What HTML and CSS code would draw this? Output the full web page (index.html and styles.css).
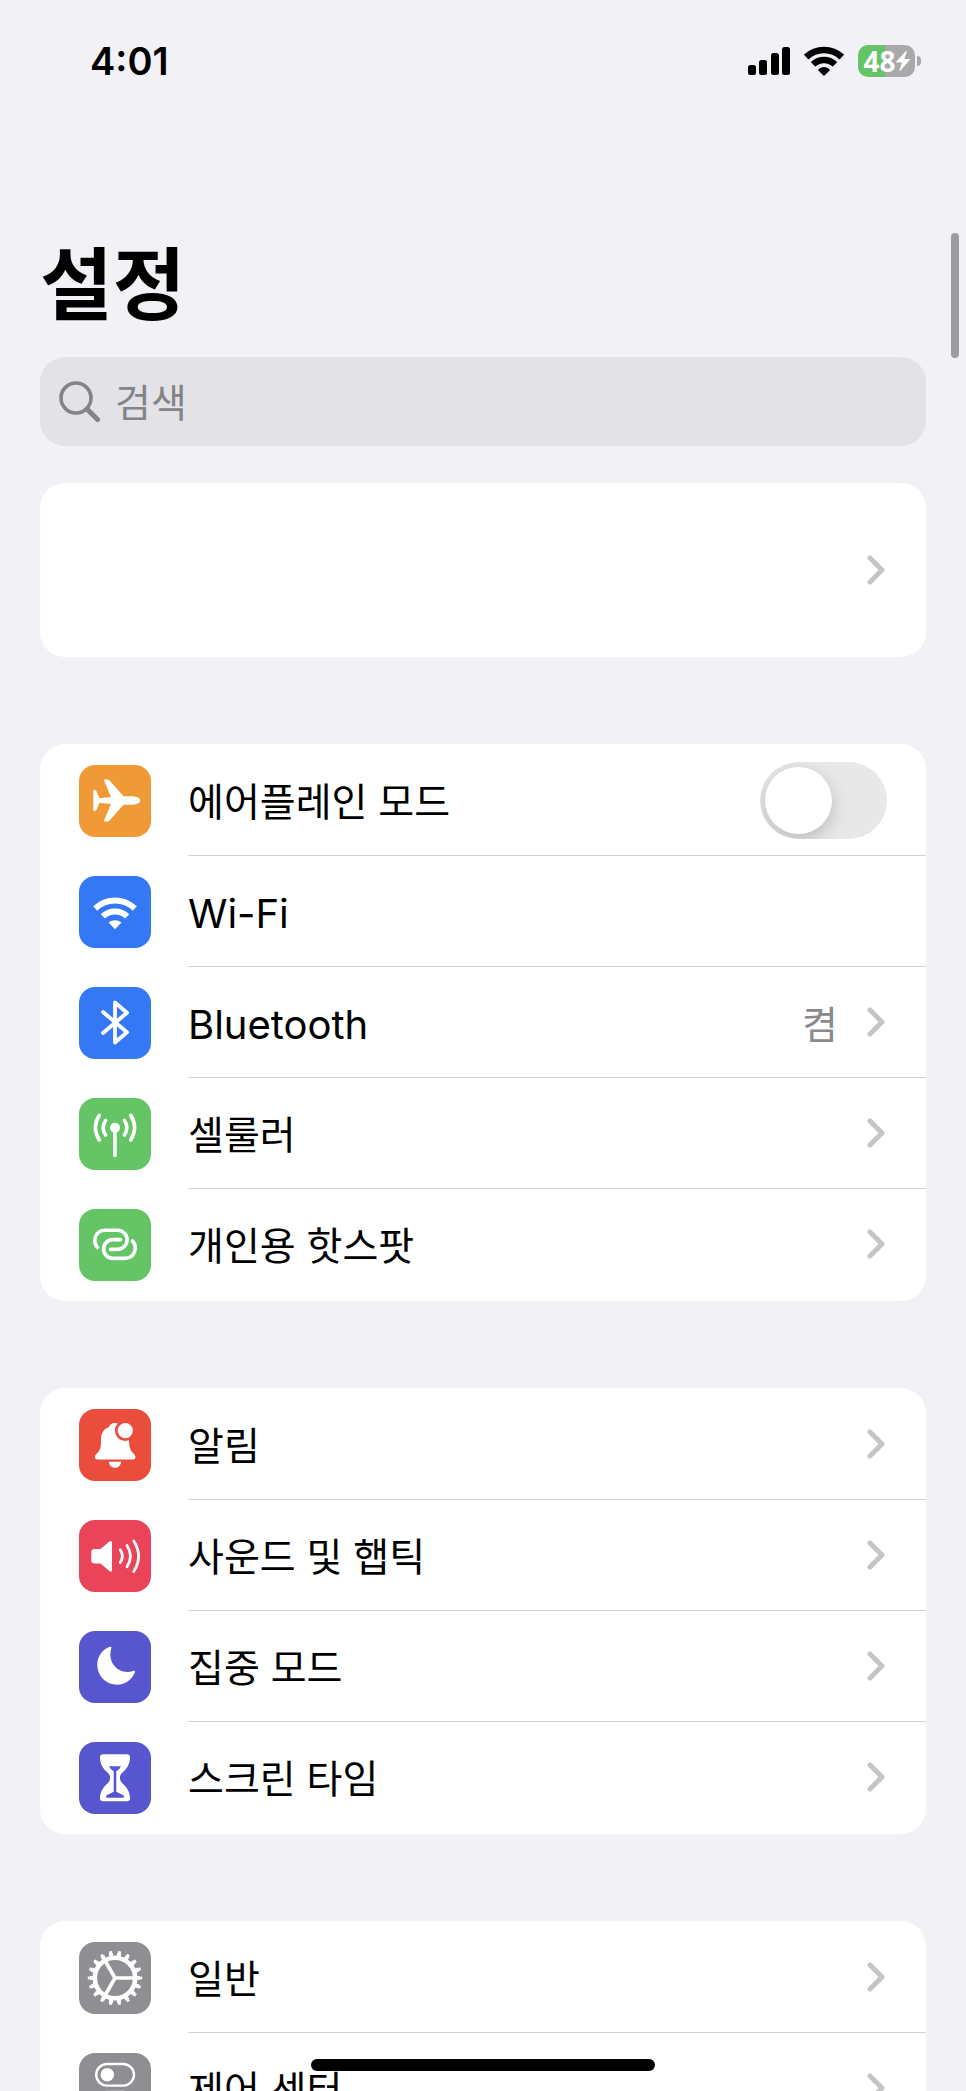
FILE: index.html
```html
<!doctype html>
<html lang="ko">
    <head>
        <meta charset="utf-8">
        <meta name="viewport" content="width=device-width,initial-scale=1">
        <title>설정</title>
        <link rel="stylesheet" href="styles.css">
    </head>
    <body>
        <svg class="defs" aria-hidden="true">
            <symbol id="chevron" viewBox="0 0 18 30">
                <path d="M3 3l12 12L3 27" fill="none" stroke="#c5c5c7" stroke-width="5" stroke-linecap="round" stroke-linejoin="round"/>
            </symbol>
        </svg>
        <header class="status-bar">
            <span class="clock">4:01</span>
            <div class="status-icons">
                <svg class="signal" viewBox="0 0 42 28">
                    <rect x="0" y="18" width="8" height="10" rx="2.5"/>
                    <rect x="11" y="13" width="8" height="15" rx="2.5"/>
                    <rect x="23" y="6" width="8" height="22" rx="2.5"/>
                    <rect x="34" y="0" width="8" height="28" rx="2.5"/>
                </svg>
                <svg class="wifi" viewBox="0 0 40 30">
                    <g fill="none" stroke="#000">
                        <path d="M2.2 11A26 26 0 0 1 37.8 11" stroke-width="6.6"/>
                        <path d="M9 18.4A16 16 0 0 1 31 18.4" stroke-width="6.4"/>
                    </g>
                    <path d="M20 30l-5.6-5.6q-.6-.8.3-1.4a9 9 0 0 1 10.6 0q.9.6.3 1.4z"/>
                </svg>
                <div class="battery">
                    <div class="battery-body">
                        <span>48</span>
                        <svg class="bolt" viewBox="0 0 14 20">
                            <path d="M10 0L.3 10.6q-.5.9.4.9H6L3.4 19.2q0 1 .9.6L13.7 9q.5-.9-.4-.9H8.2L10.8.6Q10.8-.3 10 0z" fill="#fff"/>
                        </svg>
                    </div>
                    <div class="battery-tip"></div>
                </div>
            </div>
        </header>
        <main class="main">
            <h1>설정</h1>
            <label class="search">
                <svg class="search-icon" viewBox="0 0 42 42">
                    <g fill="none" stroke="#838388" stroke-linecap="round">
                        <circle cx="17" cy="17" r="15" stroke-width="3.6"/>
                        <path d="M28 28l10.500 10.500" stroke-width="5"/>
                    </g>
                </svg>
                <input type="search" placeholder="검색" aria-label="검색">
            </label>

            <a class="group profile" href="#profile" aria-label="프로필">
                <svg class="chevron"><use href="#chevron"/></svg>
            </a>

            <ul class="group">
                <li class="row">
                    <svg class="icon orange" viewBox="0 0 72 72">
                        <path d="M61.300 35.500C61.300 38.500 56 39.700 52 39.700H44.500L30.800 55.300Q29.800 56.500 28.200 56.500H26Q24.800 56.500 25.200 55.300L32 39L20.500 37.800L17.500 44.800Q17 46 15.500 46Q14.300 46 14.300 44.800V26.200Q14.300 25 15.500 25Q17 25 17.500 26.200L20.500 33.200L32 32L25.200 15.700Q24.800 14.500 26 14.500H28.200Q29.800 14.500 30.800 15.700L44.500 31.300H52C56 31.300 61.300 32.500 61.300 35.500Z" fill="#fff"/>
                    </svg>
                    <div class="row-body">
                        <label class="name" for="airplane">에어플레인 모드</label>
                        <input class="switch" type="checkbox" role="switch" id="airplane">
                    </div>
                </li>
                <li>
                    <a class="row" href="#wifi">
                        <svg class="icon blue" viewBox="0 0 72 72">
                            <g fill="none" stroke="#fff" stroke-width="6">
                                <path d="M16.200 32.500A28.500 28.500 0 0 1 55.800 32.500"/>
                                <path d="M23.800 40.400A17.500 17.500 0 0 1 48.200 40.400"/>
                            </g>
                            <path d="M36 53.300L29.600 46.500A10 10 0 0 1 42.400 46.500Z" fill="#fff"/>
                        </svg>
                        <div class="row-body"><span class="name latin">Wi-Fi</span></div>
                    </a>
                </li>
                <li>
                    <a class="row" href="#bluetooth">
                        <svg class="icon blue" viewBox="0 0 72 72">
                            <path d="M24 25L48 45.300L36 55.500V15.500L48 25.700L24 46" fill="none" stroke="#fff" stroke-width="3.800" stroke-linecap="round" stroke-linejoin="round"/>
                        </svg>
                        <div class="row-body">
                            <span class="name latin">Bluetooth</span>
                            <span class="value">켬</span>
                            <svg class="chevron"><use href="#chevron"/></svg>
                        </div>
                    </a>
                </li>
                <li>
                    <a class="row" href="#cellular">
                        <svg class="icon green" viewBox="0 0 72 72">
                            <circle cx="36" cy="29.700" r="5" fill="#fff"/>
                            <g fill="none" stroke="#fff" stroke-width="3.600" stroke-linecap="round">
                                <path d="M36 30V57.500"/>
                                <path d="M26.600 22.500Q21.800 29.700 26.600 36.900M45.400 22.500Q50.200 29.700 45.400 36.900"/>
                                <path d="M20.300 17.300Q12.500 29.700 20.300 42M51.700 17.300Q59.500 29.700 51.700 42"/>
                            </g>
                        </svg>
                        <div class="row-body">
                            <span class="name">셀룰러</span>
                            <svg class="chevron"><use href="#chevron"/></svg>
                        </div>
                    </a>
                </li>
                <li>
                    <a class="row" href="#hotspot">
                        <svg class="icon green" viewBox="0 0 72 72">
                            <g fill="none" stroke="#fff" stroke-width="3.600" stroke-linecap="round">
                                <path d="M18.500 38.500C13.500 33 15.500 21.200 26.500 21.200H38.500A9.600 9.600 0 0 1 38.500 40.400H31.500"/>
                                <path d="M53.500 32C58.500 37.500 56.500 49.400 45.500 49.400H34A9.400 9.400 0 0 1 34 30.600H41.500"/>
                            </g>
                        </svg>
                        <div class="row-body">
                            <span class="name">개인용 핫스팟</span>
                            <svg class="chevron"><use href="#chevron"/></svg>
                        </div>
                    </a>
                </li>
            </ul>

            <ul class="group">
                <li>
                    <a class="row" href="#notifications">
                        <svg class="icon red" viewBox="0 0 72 72">
                            <path d="M36 14C33 14 31 15.500 30 18C24 20 22 25 22 31C22 40 21 41.500 17.500 44.800C15 47.500 15.500 50.500 18.500 50.500H54C57 50.500 57.300 47.500 54.700 44.800C51 41 50.300 39 50 31C50 25 47 20 42 18C41 15.500 39 14 36 14Z" fill="#fff"/>
                            <path d="M30 52.700H42C42 56 39.500 58.700 36 58.700S30 56 30 52.700Z" fill="#fff"/>
                            <circle cx="46.300" cy="21.600" r="9" fill="#fff" stroke="#eb4d3d" stroke-width="2.800"/>
                        </svg>
                        <div class="row-body">
                            <span class="name">알림</span>
                            <svg class="chevron"><use href="#chevron"/></svg>
                        </div>
                    </a>
                </li>
                <li>
                    <a class="row" href="#sounds">
                        <svg class="icon pink" viewBox="0 0 72 72">
                            <path d="M15.500 29H21.500L30 21.700Q33 19.800 33 22.500V50Q33 52.800 30 50.800L21.500 43.500H15.500Q12.300 43.500 12.300 40.500V32Q12.300 29 15.500 29Z" fill="#fff"/>
                            <g fill="none" stroke="#fff" stroke-width="2.800" stroke-linecap="round">
                                <path d="M41.200 29.800Q45.600 36.200 41.200 42.600"/>
                                <path d="M48 25.600Q55 36.200 48 46.800"/>
                                <path d="M54.800 21Q64.400 36.200 54.800 51.500"/>
                            </g>
                        </svg>
                        <div class="row-body">
                            <span class="name">사운드 및 햅틱</span>
                            <svg class="chevron"><use href="#chevron"/></svg>
                        </div>
                    </a>
                </li>
                <li>
                    <a class="row" href="#focus">
                        <svg class="icon purple" viewBox="0 0 72 72">
                            <path d="M31 15.800C24 18 18.300 25 18.300 33.500C18.300 45 27 53.700 38.300 53.700C46 53.700 53 48.700 55.800 41.500C56.300 40 55.500 39.500 54 40C42 44 27.500 34 32.300 17C32.700 15.700 32 15.500 31 15.800Z" fill="#fff"/>
                        </svg>
                        <div class="row-body">
                            <span class="name">집중 모드</span>
                            <svg class="chevron"><use href="#chevron"/></svg>
                        </div>
                    </a>
                </li>
                <li>
                    <a class="row" href="#screentime">
                        <svg class="icon purple" viewBox="0 0 72 72">
                            <path d="M24 12.300H48Q51 12.300 51 15.500C51 22 48 26.500 43.500 30.500C40.500 33.300 41 35 41 36C41 38 41.500 39.500 43.500 41.500C48 45.500 51 50 51 56.500Q51 59.300 48 59.300H24Q21 59.300 21 56.500C21 50 24 45.500 28.500 41.500C30.500 39.500 31 38 31 36C31 35 31.500 33.300 28.500 30.500C24 26.500 21 22 21 15.500Q21 12.300 24 12.300Z" fill="#fff"/>
                            <path d="M30 24.300H42Q40.500 28 37.300 29.300V49.800L44.800 53.500V55.800H27.300V53.500L34.700 49.800V29.300Q31.500 28 30 24.300Z" fill="#5756ce"/>
                        </svg>
                        <div class="row-body">
                            <span class="name">스크린 타임</span>
                            <svg class="chevron"><use href="#chevron"/></svg>
                        </div>
                    </a>
                </li>
            </ul>

            <ul class="group">
                <li>
                    <a class="row" href="#general">
                        <svg class="icon gray" viewBox="0 0 72 72">
                            <g fill="none" stroke="#fff">
                                <circle cx="36" cy="36" r="20.200" stroke-width="4.600"/>
                                <circle cx="36" cy="36" r="23.500" stroke-width="3" pathLength="180" stroke-dasharray="5 5" stroke-dashoffset="2.500"/>
                                <circle cx="36" cy="36" r="25.800" stroke-width="2.800" pathLength="180" stroke-dasharray="3.400 6.600" stroke-dashoffset="1.700"/>
                                <path d="M36 36H55M36 36L26.500 19.500M36 36L26.500 52.500" stroke-width="3.600"/>
                            </g>
                        </svg>
                        <div class="row-body">
                            <span class="name">일반</span>
                            <svg class="chevron"><use href="#chevron"/></svg>
                        </div>
                    </a>
                </li>
                <li>
                    <a class="row" href="#control">
                        <svg class="icon gray" viewBox="0 0 72 72">
                            <g fill="none" stroke="#fff" stroke-width="2.400">
                                <rect x="17.200" y="11" width="37.800" height="21.600" rx="10.800"/>
                                <rect x="17.200" y="39" width="37.800" height="21.600" rx="10.800"/>
                            </g>
                            <circle cx="28.300" cy="21.800" r="6.800" fill="#fff"/>
                            <circle cx="43.900" cy="49.800" r="6.800" fill="#fff"/>
                        </svg>
                        <div class="row-body">
                            <span class="name">제어 센터</span>
                            <svg class="chevron"><use href="#chevron"/></svg>
                        </div>
                    </a>
                </li>
            </ul>
        </main>
        <div class="scrollbar"></div>
        <div class="home-indicator"></div>
    </body>
</html>
```
FILE: styles.css
```css
* {
    box-sizing: border-box;
}
body {
    margin: 0;
    height: 100vh;
    overflow: hidden;
    position: relative;
    background: #f1f1f6;
    color: #000;
    font-family: "Noto Sans CJK KR", sans-serif;
    font-size: 39px;
}
a {
    color: inherit;
    text-decoration: none;
}
.defs {
    position: absolute;
    width: 0;
    height: 0;
}
.status-bar {
    display: flex;
    align-items: center;
    justify-content: space-between;
    height: 122px;
    padding: 0 45px 0 90px;
}
.clock {
    font-family: Inter, sans-serif;
    font-size: 38px;
    font-weight: 600;
}
.status-icons {
    display: flex;
    align-items: center;
    gap: 14px;
}
.signal {
    width: 42px;
    height: 28px;
}
.wifi {
    width: 40px;
    height: 30px;
}
.battery {
    display: flex;
    align-items: center;
    gap: 2px;
}
.battery-body {
    display: flex;
    align-items: center;
    justify-content: center;
    width: 57px;
    height: 32px;
    border-radius: 10px;
    background: linear-gradient(to right, #65c466 48%, #a9a9ab 48%);
    color: #fff;
    font-family: "Noto Sans", sans-serif;
    font-size: 28px;
    font-weight: 700;
    line-height: 32px;
}
.bolt {
    width: 14px;
    height: 20px;
}
.battery-tip {
    width: 4px;
    height: 10px;
    border-radius: 0 4px 4px 0;
    background: #a9a9ab;
}
.main {
    padding: 100px 40px 0;
}
h1 {
    margin: 0;
    font-size: 79px;
    font-weight: 700;
    line-height: 116px;
}
.search {
    display: flex;
    align-items: center;
    gap: 14px;
    height: 89px;
    margin-top: 19px;
    padding: 0 19px;
    border-radius: 25px;
    background: #e3e2e7;
}
.search-icon {
    width: 42px;
    height: 42px;
}
.search input {
    flex: 1;
    min-width: 0;
    padding: 0 0 4px;
    border: 0;
    outline: 0;
    background: none;
    font: inherit;
}
.search input::placeholder {
    color: #838388;
}
.group {
    margin: 0 0 87px;
    padding: 1px 0;
    border-radius: 25px;
    background: #fff;
    list-style: none;
}
.profile {
    display: flex;
    align-items: center;
    justify-content: flex-end;
    height: 174px;
    margin-top: 37px;
    padding: 0 41px;
}
.row {
    display: flex;
    align-items: center;
    gap: 37px;
    padding-left: 39px;
}
.icon {
    flex: none;
    width: 72px;
    height: 72px;
    border-radius: 16px;
}
.orange {
    background: #f09a37;
}
.blue {
    background: #3478f6;
}
.green {
    background: #65c466;
}
.red {
    background: #eb4d3d;
}
.pink {
    background: #ea445a;
}
.purple {
    background: #5756ce;
}
.gray {
    background: #8e8e93;
}
.row-body {
    flex: 1;
    display: flex;
    align-items: center;
    height: 111px;
    padding-right: 41px;
    border-bottom: 1px solid #d2d2d4;
}
.group > :last-child .row-body {
    border-bottom-color: transparent;
}
.name {
    flex: 1;
    padding-bottom: 2px;
}
.latin {
    padding: 5px 0 0;
    font-family: Inter, sans-serif;
    font-size: 40px;
}
.value {
    margin-right: 29px;
    color: #8a8a8e;
}
.chevron {
    flex: none;
    width: 18px;
    height: 30px;
}
.switch {
    appearance: none;
    width: 127px;
    height: 77px;
    margin: 0 -2px 0 0;
    padding: 5px;
    border-radius: 39px;
    background: #e8e8e8;
    overflow: hidden;
}
.switch::before {
    content: "";
    display: block;
    width: 67px;
    height: 67px;
    border-radius: 50%;
    background: #fff;
    box-shadow: 0 6px 18px rgba(0, 0, 0, 0.2);
}
.switch:checked {
    background: #65c466;
}
.switch:checked::before {
    margin-left: auto;
}
.scrollbar {
    position: absolute;
    top: 233px;
    right: 7px;
    width: 8px;
    height: 125px;
    border-radius: 4px;
    background: #9c9c9e;
}
.home-indicator {
    position: fixed;
    bottom: 20px;
    left: 50%;
    width: 344px;
    height: 12px;
    margin-left: -172px;
    border-radius: 6px;
    background: #000;
}
```
